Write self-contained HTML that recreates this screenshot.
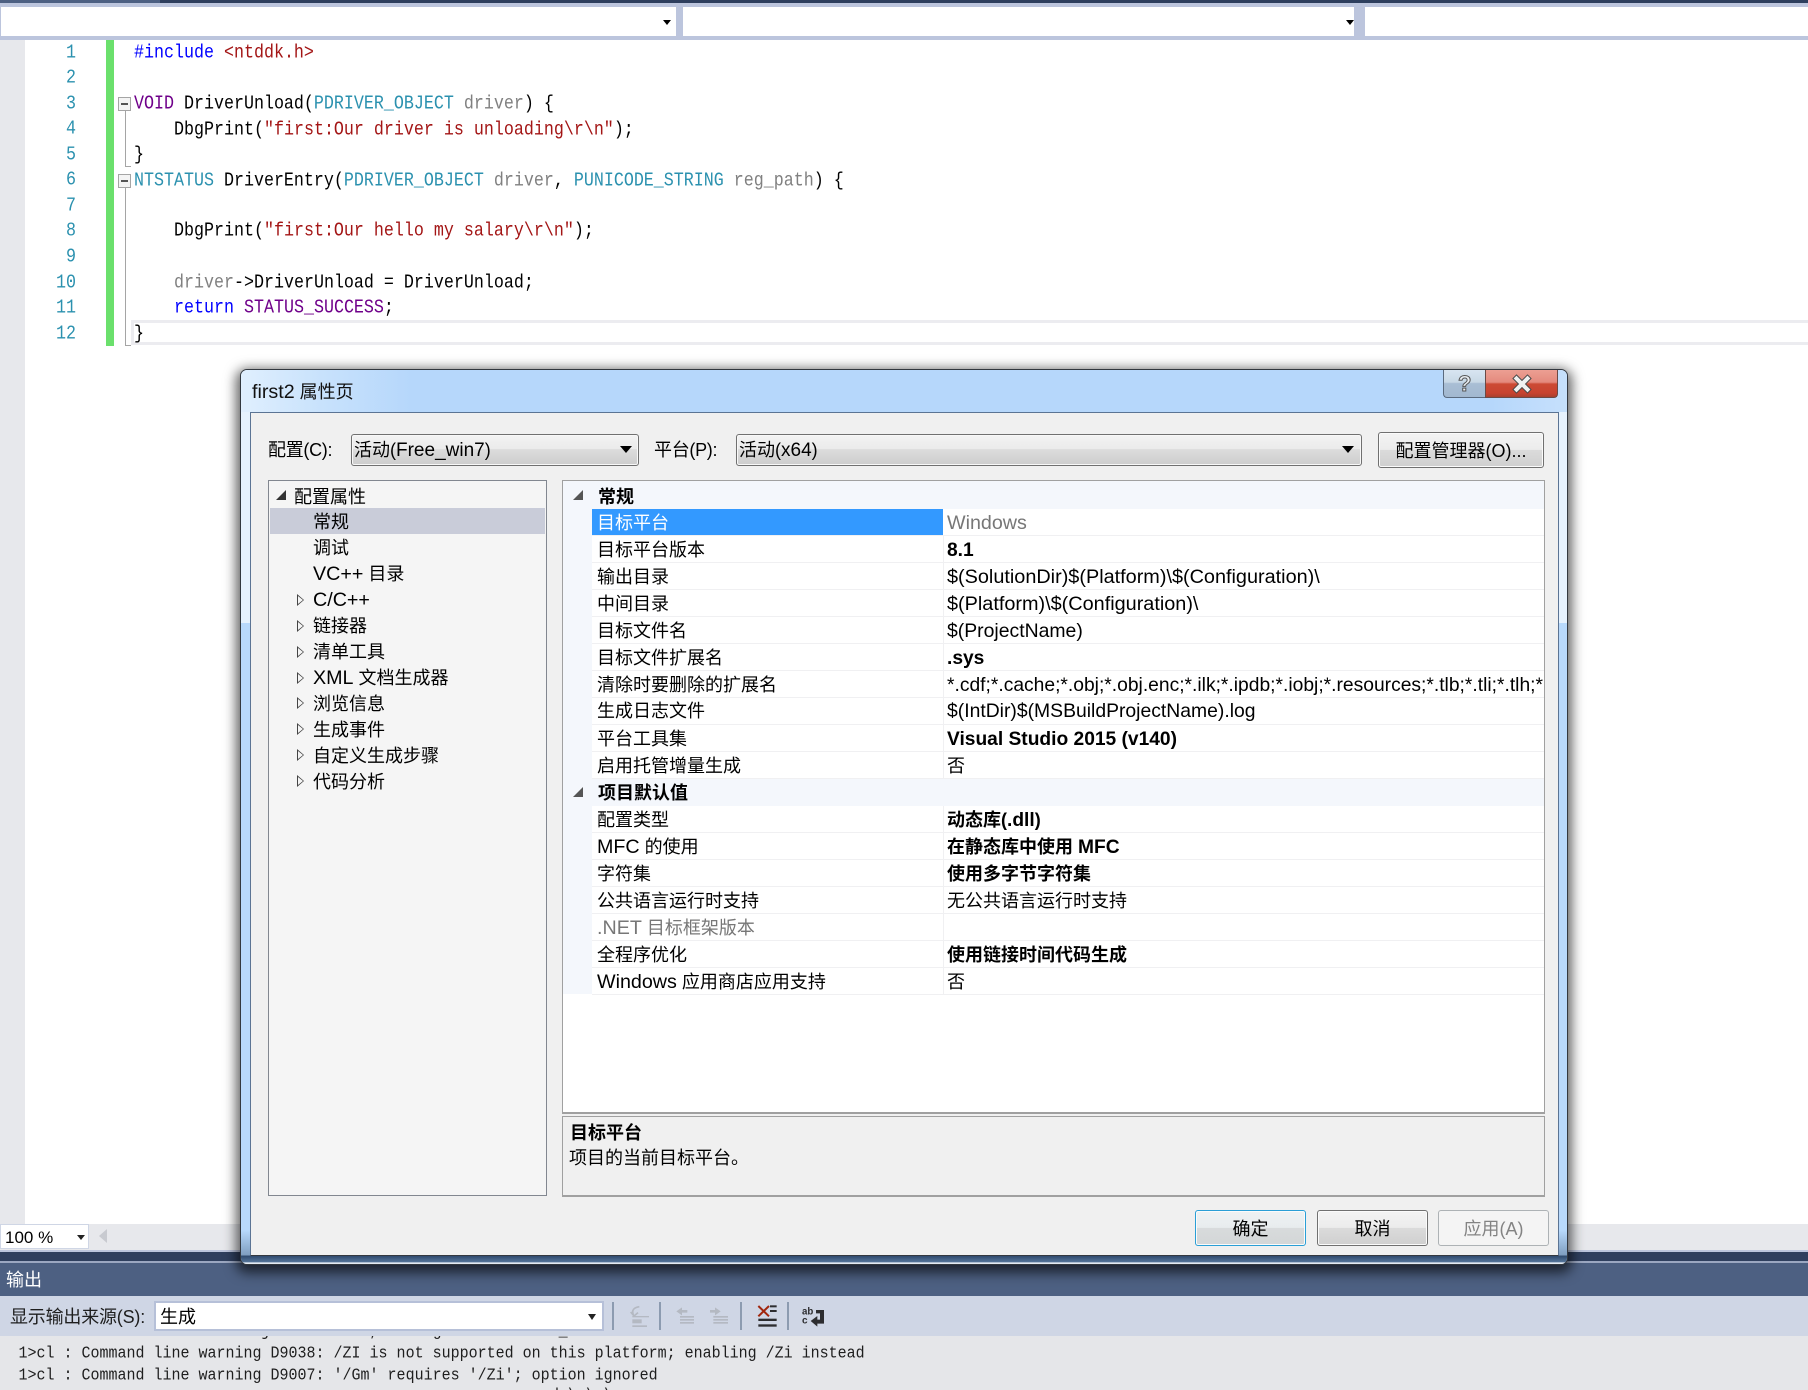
<!DOCTYPE html>
<html><head><meta charset="utf-8"><style>
html,body{margin:0;padding:0;background:#fff}
#r{position:relative;width:1808px;height:1390px;overflow:hidden;background:#fff;font-family:"Liberation Sans","Noto Sans CJK SC",sans-serif;color:#000}
#r div,#r span.a{position:absolute}
.t{position:absolute;white-space:nowrap;font-size:18px;line-height:26px;height:26px}
.l{font-size:19.7px;line-height:1}
.m{font-size:19px;line-height:1}
.b{font-weight:bold}
.b .l,.l.b{font-size:19.2px}
.c{position:absolute;white-space:pre;font-family:"Liberation Mono",monospace;font-size:16.67px;line-height:24px;height:24px;color:#000;transform:scaleY(1.14);transform-origin:50% 50%}
.n{position:absolute;left:40px;width:36px;text-align:right;font-family:"Liberation Mono",monospace;font-size:16.67px;line-height:24px;color:#2b91af;transform:scaleY(1.14)}
.p{color:#6f008a}.f{color:#2b91af}.g{color:#808080}.s{color:#a31515}.k{color:#0000ff}
.o{position:absolute;white-space:pre;font-family:"Liberation Mono",monospace;font-size:15px;line-height:20px;color:#1e1e1e;transform:scaleY(1.1)}
.h{left:592px;width:952px;height:1px;background:#f0f0f2}
.ta{position:absolute;left:297px;width:0;height:0;border-left:7px solid #444;border-top:6px solid transparent;border-bottom:6px solid transparent}
.ta:after{content:"";position:absolute;left:-6px;top:-4px;width:0;height:0;border-left:5px solid #f5f5f5;border-top:4px solid transparent;border-bottom:4px solid transparent}
.dd{position:absolute;width:0;height:0;border-left:6px solid transparent;border-right:6px solid transparent;border-top:7px solid #000}
.btn{box-sizing:border-box;border-radius:3px;background:linear-gradient(#f3f3f3 0,#ececec 49%,#dbdbdb 50%,#cfcfcf 100%);border:1px solid #707070;box-shadow:inset 0 0 0 1px #fbfbfb}
.cb{box-sizing:border-box;border-radius:3px;background:linear-gradient(#f3f3f3 0,#ebebeb 46%,#dcdcdc 48%,#cdcdcd 100%);border:1px solid #707070;box-shadow:inset 0 0 0 1px #f8f8f8}
</style></head><body><div id="r">

<!-- top chrome -->
<div style="left:0;top:0;width:1808px;height:3px;background:#2e3f5e"></div>
<div style="left:0;top:0;width:160px;height:3px;background:#4d6082"></div>
<div style="left:0;top:3px;width:1808px;height:37px;background:#bcc5dd"></div>
<div style="left:1px;top:7px;width:675px;height:29px;background:#fff"></div>
<div class="dd" style="left:663px;top:20px;border-left-width:4px;border-right-width:4px;border-top-width:5px"></div>
<div style="left:683px;top:7px;width:671px;height:29px;background:#fff"></div>
<div class="dd" style="left:1346px;top:20px;border-left-width:4px;border-right-width:4px;border-top-width:5px"></div>
<div style="left:1365px;top:7px;width:443px;height:29px;background:#fff"></div>

<!-- editor -->
<div style="left:0;top:40px;width:25px;height:1184px;background:#e7e8ec"></div>
<div style="left:106px;top:40px;width:8px;height:306px;background:#6be06c"></div>
<div style="left:131px;top:320px;width:1677px;height:19px;border:solid #ececf0;border-width:3px 0;"></div>
<div style="left:131px;top:320px;width:3px;height:25px;background:#ececf0"></div>

<span class="n" style="top:42px">1</span>
<span class="n" style="top:67px">2</span>
<span class="n" style="top:93px">3</span>
<span class="n" style="top:118px">4</span>
<span class="n" style="top:144px">5</span>
<span class="n" style="top:169px">6</span>
<span class="n" style="top:195px">7</span>
<span class="n" style="top:220px">8</span>
<span class="n" style="top:246px">9</span>
<span class="n" style="top:272px">10</span>
<span class="n" style="top:297px">11</span>
<span class="n" style="top:323px">12</span>

<div style="left:118px;top:97px;width:11px;height:12px;border:1px solid #a5a5a5;background:#f4f4f4"></div>
<div style="left:121px;top:103px;width:7px;height:2px;background:#555"></div>
<div style="left:125px;top:111px;width:1px;height:56px;background:#a5a5a5"></div>
<div style="left:125px;top:166px;width:6px;height:1px;background:#a5a5a5"></div>
<div style="left:118px;top:174px;width:11px;height:12px;border:1px solid #a5a5a5;background:#f4f4f4"></div>
<div style="left:121px;top:180px;width:7px;height:2px;background:#555"></div>
<div style="left:125px;top:188px;width:1px;height:157px;background:#a5a5a5"></div>
<div style="left:125px;top:345px;width:6px;height:1px;background:#a5a5a5"></div>

<span class="c" style="left:134px;top:42px"><span class="k">#include</span> <span class="s">&lt;ntddk.h&gt;</span></span>
<span class="c" style="left:134px;top:93px"><span class="p">VOID</span> DriverUnload(<span class="f">PDRIVER_OBJECT</span> <span class="g">driver</span>) {</span>
<span class="c" style="left:174px;top:119px">DbgPrint(<span class="s">"first:Our driver is unloading\r\n"</span>);</span>
<span class="c" style="left:134px;top:144px">}</span>
<span class="c" style="left:134px;top:170px"><span class="f">NTSTATUS</span> DriverEntry(<span class="f">PDRIVER_OBJECT</span> <span class="g">driver</span>, <span class="f">PUNICODE_STRING</span> <span class="g">reg_path</span>) {</span>
<span class="c" style="left:174px;top:220px">DbgPrint(<span class="s">"first:Our hello my salary\r\n"</span>);</span>
<span class="c" style="left:174px;top:272px"><span class="g">driver</span>-&gt;DriverUnload = DriverUnload;</span>
<span class="c" style="left:174px;top:297px"><span class="k">return</span> <span class="p">STATUS_SUCCESS</span>;</span>
<span class="c" style="left:134px;top:323px">}</span>

<!-- status row -->
<div style="left:0;top:1224px;width:1808px;height:26px;background:#e7e8ec"></div>
<div style="left:0;top:1224px;width:89px;height:25px;background:#fff;box-sizing:border-box;border:1px solid #cfd6e5"></div>
<span class="t" style="left:5px;top:1225px;font-size:17px">100 %</span>
<div class="dd" style="left:77px;top:1235px;border-left-width:4px;border-right-width:4px;border-top-width:5px;border-top-color:#222"></div>
<div style="left:99px;top:1229px;width:0;height:0;border-right:8px solid #c8cad0;border-top:7px solid transparent;border-bottom:7px solid transparent"></div>

<!-- output tool window -->
<div style="left:0;top:1336px;width:1808px;height:54px;background:#e5e6e9"></div>
<span class="o" style="left:18.5px;top:1322px">1&gt;------ Build started: Project: first2, Configuration: Free_win7 x64 ------</span>
<span class="o" style="left:18.5px;top:1344px">1&gt;cl : Command line warning D9038: /ZI is not supported on this platform; enabling /Zi instead</span>
<span class="o" style="left:18.5px;top:1366px">1&gt;cl : Command line warning D9007: '/Gm' requires '/Zi'; option ignored</span>
<span class="o" style="left:550px;top:1386px">d:\ \ \ </span>
<div style="left:0;top:1250px;width:1808px;height:2px;background:#bcc5dd"></div>
<div style="left:0;top:1252px;width:1808px;height:9px;background:#2f3f5e"></div>
<div style="left:0;top:1261px;width:1808px;height:2px;background:#9ba7c1"></div>
<div style="left:0;top:1263px;width:1808px;height:33px;background:#4d6082"></div>
<span class="t" style="left:6px;top:1267px;color:#fff">输出</span>
<div style="left:0;top:1296px;width:1808px;height:40px;background:#cfd6e5"></div>
<span class="t" style="left:10px;top:1304px;color:#1e1e1e;letter-spacing:-.2px">显示输出来源(S):</span>
<div style="left:154px;top:1301px;width:450px;height:30px;box-sizing:border-box;background:#fff;border:2px solid #b6c0d8"></div>
<span class="t" style="left:160px;top:1304px">生成</span>
<div class="dd" style="left:588px;top:1314px;border-left-width:4px;border-right-width:4px;border-top-width:6px;border-top-color:#222"></div>

<svg style="position:absolute;left:600px;top:1296px" width="240" height="44" viewBox="0 0 720 132">
<g fill="#8c9bb0"><rect x="36" y="18" width="6" height="84"/><rect x="177" y="18" width="6" height="84"/><rect x="420" y="18" width="6" height="84"/><rect x="561" y="18" width="6" height="84"/></g>
<g fill="none" stroke="#b4b9c2" stroke-width="5"><path d="M118 32 Q92 36 100 56"/><path d="M92 48 L102 60 L114 50"/></g>
<g fill="#b4b9c2"><rect x="97" y="60" width="50" height="4"/><rect x="97" y="70" width="28" height="12"/><rect x="97" y="88" width="44" height="5"/>
<path d="M229 46 L246 34 L246 42 L262 42 L262 50 L246 50 L246 58Z"/><rect x="240" y="60" width="42" height="5"/><rect x="240" y="69" width="42" height="5"/><rect x="240" y="78" width="42" height="5"/>
<path d="M362 46 L345 34 L345 42 L330 42 L330 50 L345 50 L345 58Z"/><rect x="340" y="60" width="44" height="5"/><rect x="340" y="69" width="44" height="5"/><rect x="340" y="78" width="44" height="5"/></g>
<g stroke="#a1260d" stroke-width="6" fill="none"><path d="M475 30 L507 61"/><path d="M507 30 L475 61"/></g>
<g fill="#2d2d30"><rect x="510" y="28" width="20" height="6"/><rect x="510" y="42" width="20" height="6"/><rect x="475" y="68" width="55" height="7"/><rect x="475" y="85" width="55" height="7"/>
<path d="M648 42 L672 42 L672 83 L652 83 L652 92 L632 75 L652 60 L652 71 L660 71 L660 52 L648 52Z"/></g>
<text x="606" y="55" font-family="Liberation Sans" font-size="30" font-weight="bold" fill="#2d2d30" textLength="34" lengthAdjust="spacingAndGlyphs">ab</text>
<text x="606" y="82" font-family="Liberation Sans" font-size="30" font-weight="bold" fill="#2d2d30">c</text>
</svg>

<!-- dialog -->
<div style="left:240px;top:369px;width:1328px;height:896px;box-sizing:border-box;border:1px solid #33383f;border-radius:7px;box-shadow:0 4px 12px 4px rgba(0,0,0,.62);background:#e6f2fe;overflow:hidden">
  <div style="left:0;top:253px;width:1326px;height:641px;background:linear-gradient(#b8d9fc 0,#b8d9fc 94.7%,#7f9ec0 98.6%,#2f4a6e 98.75%,#55759b 99.7%,#e4ebf3 99.8%,#e4ebf3 100%)"></div>
  <div style="left:0;top:0;width:1326px;height:42px;background:linear-gradient(90deg,#e0effe 0,#c8e2fc 80px,#b6d7fb 170px,#b6d7fb 1250px,#c6e0fc 1326px)"></div>
</div>
<div style="left:1443px;top:370px;width:42px;height:28px;box-sizing:border-box;border:1px solid #5a6a7e;border-top:0;border-right:0;border-radius:0 0 0 4px;background:linear-gradient(#d8e5f1 0,#c8d8e6 45%,#a9bed4 50%,#a2b8d0 100%)"></div>
<div style="left:1485px;top:370px;width:73px;height:28px;box-sizing:border-box;border:1px solid #6a4a46;border-top:0;border-radius:0 0 4px 0;background:linear-gradient(#ec9f93 0,#e48a7d 45%,#cc4a34 52%,#c84330 85%,#a9402e 100%)"></div>
<span class="t" style="left:1458px;top:371px;font-size:22px;font-weight:bold;color:#e8edf2;-webkit-text-stroke:1px #555">?</span>
<svg style="position:absolute;left:1510px;top:374px" width="24" height="20" viewBox="0 0 24 20"><path d="M6.5 4.5 L17.5 15.5 M17.5 4.5 L6.5 15.5" stroke="#4a4a4a" stroke-width="6" stroke-linecap="square"/><path d="M6.5 4.5 L17.5 15.5 M17.5 4.5 L6.5 15.5" stroke="#f1f1f1" stroke-width="4" stroke-linecap="square"/></svg>
<span class="t" style="left:252px;top:379px;color:#111"><span class="l">first2</span> 属性页</span>

<div style="left:250px;top:412px;width:1309px;height:844px;box-sizing:border-box;background:#f0f0f0;border:1px solid #5b7494;border-bottom-color:#33383f"></div>

<span class="t" style="left:268px;top:437px;letter-spacing:-.3px">配置(C):</span>
<div class="cb" style="left:351px;top:434px;width:288px;height:32px"></div>
<span class="t" style="left:354px;top:437px">活动(<span class="m">Free_win7</span>)</span>
<div class="dd" style="left:620px;top:446px"></div>
<span class="t" style="left:654px;top:437px;letter-spacing:-.3px">平台(P):</span>
<div class="cb" style="left:736px;top:434px;width:626px;height:32px"></div>
<span class="t" style="left:739px;top:437px">活动(<span class="m">x64</span>)</span>
<div class="dd" style="left:1342px;top:446px"></div>
<div class="btn" style="left:1378px;top:432px;width:166px;height:36px"></div>
<span class="t" style="left:1378px;width:166px;text-align:center;top:438px">配置管理器(O)...</span>

<!-- tree -->
<div style="left:268px;top:480px;width:279px;height:716px;box-sizing:border-box;background:#f5f5f5;border:1px solid #828790"></div>
<div style="left:270px;top:508px;width:275px;height:26px;background:#c9ccd9"></div>
<div style="left:276px;top:490px;width:0;height:0;border-bottom:10px solid #333;border-left:10px solid transparent"></div>
<span class="t" style="left:294px;top:484px">配置属性</span>
<span class="t" style="left:313px;top:509px">常规</span>
<span class="t" style="left:313px;top:535px">调试</span>
<span class="t" style="left:313px;top:561px"><span class="l">VC++</span> 目录</span>
<i class="ta" style="top:594px"></i><span class="t" style="left:313px;top:587px"><span class="l">C/C++</span></span>
<i class="ta" style="top:620px"></i><span class="t" style="left:313px;top:613px">链接器</span>
<i class="ta" style="top:646px"></i><span class="t" style="left:313px;top:639px">清单工具</span>
<i class="ta" style="top:672px"></i><span class="t" style="left:313px;top:665px"><span class="l">XML</span> 文档生成器</span>
<i class="ta" style="top:697px"></i><span class="t" style="left:313px;top:691px">浏览信息</span>
<i class="ta" style="top:723px"></i><span class="t" style="left:313px;top:717px">生成事件</span>
<i class="ta" style="top:749px"></i><span class="t" style="left:313px;top:743px">自定义生成步骤</span>
<i class="ta" style="top:775px"></i><span class="t" style="left:313px;top:769px">代码分析</span>

<!-- property grid -->
<div style="left:562px;top:480px;width:983px;height:634px;box-sizing:border-box;background:#fff;border:1px solid #a0a0a0;border-bottom-width:2px"></div>
<div style="left:563px;top:481px;width:29px;height:513px;background:#f4f7fc"></div>
<div style="left:563px;top:481px;width:981px;height:28px;background:#f4f7fc"></div>
<div style="left:563px;top:778px;width:981px;height:28px;background:#f4f7fc"></div>
<div style="left:592px;top:509px;width:351px;height:26px;background:#3399ff"></div>
<div style="left:943px;top:535px;width:1px;height:243px;background:#f0f0f2"></div>
<div style="left:943px;top:806px;width:1px;height:188px;background:#f0f0f2"></div>
<div class="h" style="top:535px"></div><div class="h" style="top:562px"></div><div class="h" style="top:589px"></div><div class="h" style="top:616px"></div><div class="h" style="top:643px"></div><div class="h" style="top:670px"></div><div class="h" style="top:697px"></div><div class="h" style="top:724px"></div><div class="h" style="top:751px"></div><div class="h" style="top:778px"></div>
<div class="h" style="top:832px"></div><div class="h" style="top:859px"></div><div class="h" style="top:886px"></div><div class="h" style="top:913px"></div><div class="h" style="top:940px"></div><div class="h" style="top:967px"></div><div class="h" style="top:994px"></div>
<div style="left:573px;top:490px;width:0;height:0;border-bottom:10px solid #555;border-left:10px solid transparent"></div>
<div style="left:573px;top:787px;width:0;height:0;border-bottom:10px solid #555;border-left:10px solid transparent"></div>

<span class="t b" style="left:598px;top:484px">常规</span>
<span class="t" style="left:597px;top:510px;color:#fff">目标平台</span><span class="t" style="left:947px;top:510px;color:#777"><span class="l">Windows</span></span>
<span class="t" style="left:597px;top:537px">目标平台版本</span><span class="t b" style="left:947px;top:537px"><span class="l">8.1</span></span>
<span class="t" style="left:597px;top:564px">输出目录</span><span class="t" style="left:947px;top:564px"><span class="l" style="font-size:19.85px">$(SolutionDir)$(Platform)\$(Configuration)\</span></span>
<span class="t" style="left:597px;top:591px">中间目录</span><span class="t" style="left:947px;top:591px"><span class="l" style="font-size:19.85px">$(Platform)\$(Configuration)\</span></span>
<span class="t" style="left:597px;top:618px">目标文件名</span><span class="t" style="left:947px;top:618px"><span class="l" style="font-size:19.4px">$(ProjectName)</span></span>
<span class="t" style="left:597px;top:645px">目标文件扩展名</span><span class="t b" style="left:947px;top:645px"><span class="l">.sys</span></span>
<span class="t" style="left:597px;top:672px">清除时要删除的扩展名</span>
<div style="left:947px;top:672px;width:597px;height:26px;overflow:hidden"><span class="t" style="left:0;top:0"><span class="l" style="font-size:19.25px">*.cdf;*.cache;*.obj;*.obj.enc;*.ilk;*.ipdb;*.iobj;*.resources;*.tlb;*.tli;*.tlh;*.tmp</span></span></div>
<span class="t" style="left:597px;top:698px">生成日志文件</span><span class="t" style="left:947px;top:698px"><span class="l" style="font-size:19.35px">$(IntDir)$(MSBuildProjectName).log</span></span>
<span class="t" style="left:597px;top:726px">平台工具集</span><span class="t b" style="left:947px;top:726px"><span class="l">Visual Studio 2015 (v140)</span></span>
<span class="t" style="left:597px;top:753px">启用托管增量生成</span><span class="t" style="left:947px;top:753px">否</span>
<span class="t b" style="left:598px;top:780px">项目默认值</span>
<span class="t" style="left:597px;top:807px">配置类型</span><span class="t b" style="left:947px;top:807px">动态库(<span class="l">.dll</span>)</span>
<span class="t" style="left:597px;top:834px"><span class="l">MFC</span> 的使用</span><span class="t b" style="left:947px;top:834px">在静态库中使用 <span class="l">MFC</span></span>
<span class="t" style="left:597px;top:861px">字符集</span><span class="t b" style="left:947px;top:861px">使用多字节字符集</span>
<span class="t" style="left:597px;top:888px">公共语言运行时支持</span><span class="t" style="left:947px;top:888px">无公共语言运行时支持</span>
<span class="t" style="left:597px;top:915px;color:#777"><span class="l">.NET</span> 目标框架版本</span>
<span class="t" style="left:597px;top:942px">全程序优化</span><span class="t b" style="left:947px;top:942px">使用链接时间代码生成</span>
<span class="t" style="left:597px;top:969px"><span class="l">Windows</span> 应用商店应用支持</span><span class="t" style="left:947px;top:969px">否</span>

<!-- description -->
<div style="left:562px;top:1116px;width:983px;height:81px;box-sizing:border-box;background:#f0f0f0;border:1px solid #a0a0a0;border-bottom-width:2px"></div>
<span class="t b" style="left:570px;top:1120px">目标平台</span>
<span class="t" style="left:569px;top:1145px">项目的当前目标平台。</span>

<!-- buttons -->
<div class="btn" style="left:1195px;top:1210px;width:111px;height:36px;border-color:#2a9fd6;background:linear-gradient(#eef2f3 0,#e8ecee 49%,#d8dbdc 50%,#d3d6d7 100%)"></div>
<span class="t" style="left:1195px;width:111px;text-align:center;top:1216px">确定</span>
<div class="btn" style="left:1317px;top:1210px;width:111px;height:36px"></div>
<span class="t" style="left:1317px;width:111px;text-align:center;top:1216px">取消</span>
<div class="btn" style="left:1438px;top:1210px;width:111px;height:36px;background:#f4f4f4;border-color:#adb2b5;box-shadow:none"></div>
<span class="t" style="left:1438px;width:111px;text-align:center;top:1216px;color:#838383">应用(A)</span>

</div></body></html>
